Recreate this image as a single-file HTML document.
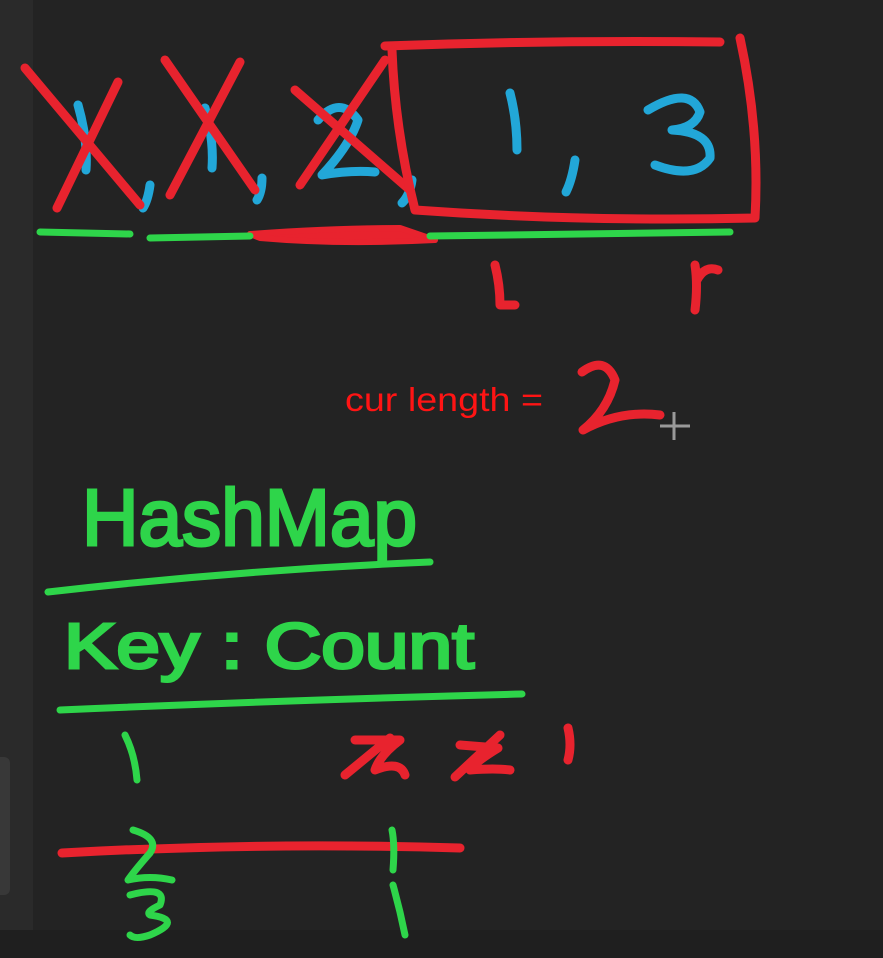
<!DOCTYPE html>
<html><head><style>
html,body{margin:0;padding:0;background:#232323;}
svg{display:block}
text{font-family:"Liberation Sans",sans-serif}
</style></head><body>
<svg width="883" height="958" viewBox="0 0 883 958" xmlns="http://www.w3.org/2000/svg">
<rect width="883" height="958" fill="#232323"/>
<rect x="0" y="0" width="33" height="930" fill="#2a2a2a"/>
<rect x="0" y="930" width="883" height="28" fill="#1f1f1f"/>
<rect x="-8" y="757" width="18" height="138" rx="6" fill="#383838"/>
<g fill="none" stroke-linecap="round" stroke-linejoin="round">
<g stroke="#22a7d8" stroke-width="9">
<path d="M78 105 Q88 140 86 170"/>
<path d="M150 185 Q148 200 143 208"/>
<path d="M205 108 Q214 140 212 168"/>
<path d="M262 178 Q262 192 257 200"/>
<path d="M318 120 Q340 95 358 120 Q350 145 322 175 Q350 170 375 172"/>
<path d="M412 180 Q410 195 402 203"/>
<path d="M510 93 Q517 120 517 150"/>
<path d="M575 160 Q572 180 566 192"/>
<path d="M648 110 Q690 85 700 112 Q695 128 672 130 Q712 132 710 158 Q695 180 655 165"/>
</g>
<g stroke="#e8232e" stroke-width="9">
<path d="M25 68 L140 205"/><path d="M118 82 L57 208"/>
<path d="M165 60 L255 190"/><path d="M240 62 L170 195"/>
<path d="M295 90 L410 190"/><path d="M385 60 L300 185"/>
<path d="M385 46 Q550 40 720 42"/>
<path d="M392 50 Q395 130 415 210 Q580 222 755 218 Q760 130 740 38"/>
<path d="M495 265 Q500 285 500 305 L515 305"/>
<path d="M695 265 Q698 285 695 310 M697 280 Q705 265 718 270"/>
<path d="M582 372 Q605 355 615 380 Q608 410 583 430 Q620 410 660 415"/>
<path d="M345 775 L390 738 M355 740 L400 740 Q380 755 375 770 Q400 760 405 775"/>
<path d="M455 777 L500 735 M460 745 L498 748 Q475 762 470 770 Q495 768 510 770"/>
<path d="M568 728 Q572 745 568 760"/>
<path d="M62 853 Q260 842 460 848"/>
</g>
<path d="M250 234 Q330 228 400 228 L435 240 Q340 245 260 238 Z" fill="#e8232e" stroke="#e8232e" stroke-width="6"/>
<g stroke="#2ed54a" stroke-width="7">
<path d="M40 232 L130 234"/><path d="M150 238 L250 236"/><path d="M430 236 L730 232"/>
<path d="M48 592 Q240 570 430 562"/>
<path d="M60 710 Q290 700 522 694"/>
<path d="M125 735 Q135 755 137 780"/>
<path d="M133 830 Q160 838 150 853 Q135 870 128 880 Q150 875 172 880"/>
<path d="M130 895 Q168 885 160 905 Q145 912 150 915 Q185 920 150 935 Q135 940 130 935"/>
<path d="M392 830 Q395 845 393 870"/>
<path d="M393 885 Q400 910 405 935"/>
</g>
</g>
<text x="82" y="545" font-size="80" fill="#2ed54a" stroke="#2ed54a" stroke-width="3" textLength="335" lengthAdjust="spacingAndGlyphs">HashMap</text>
<text x="64" y="668" font-size="64" fill="#2ed54a" stroke="#2ed54a" stroke-width="3" textLength="410" lengthAdjust="spacingAndGlyphs">Key : Count</text>
<text x="345" y="411" font-size="33" fill="#ff1414" textLength="198" lengthAdjust="spacingAndGlyphs">cur length =</text>
<g stroke="#999" stroke-width="3"><path d="M674 412 V440 M660 426 H690"/></g>
</svg>
</body></html>
